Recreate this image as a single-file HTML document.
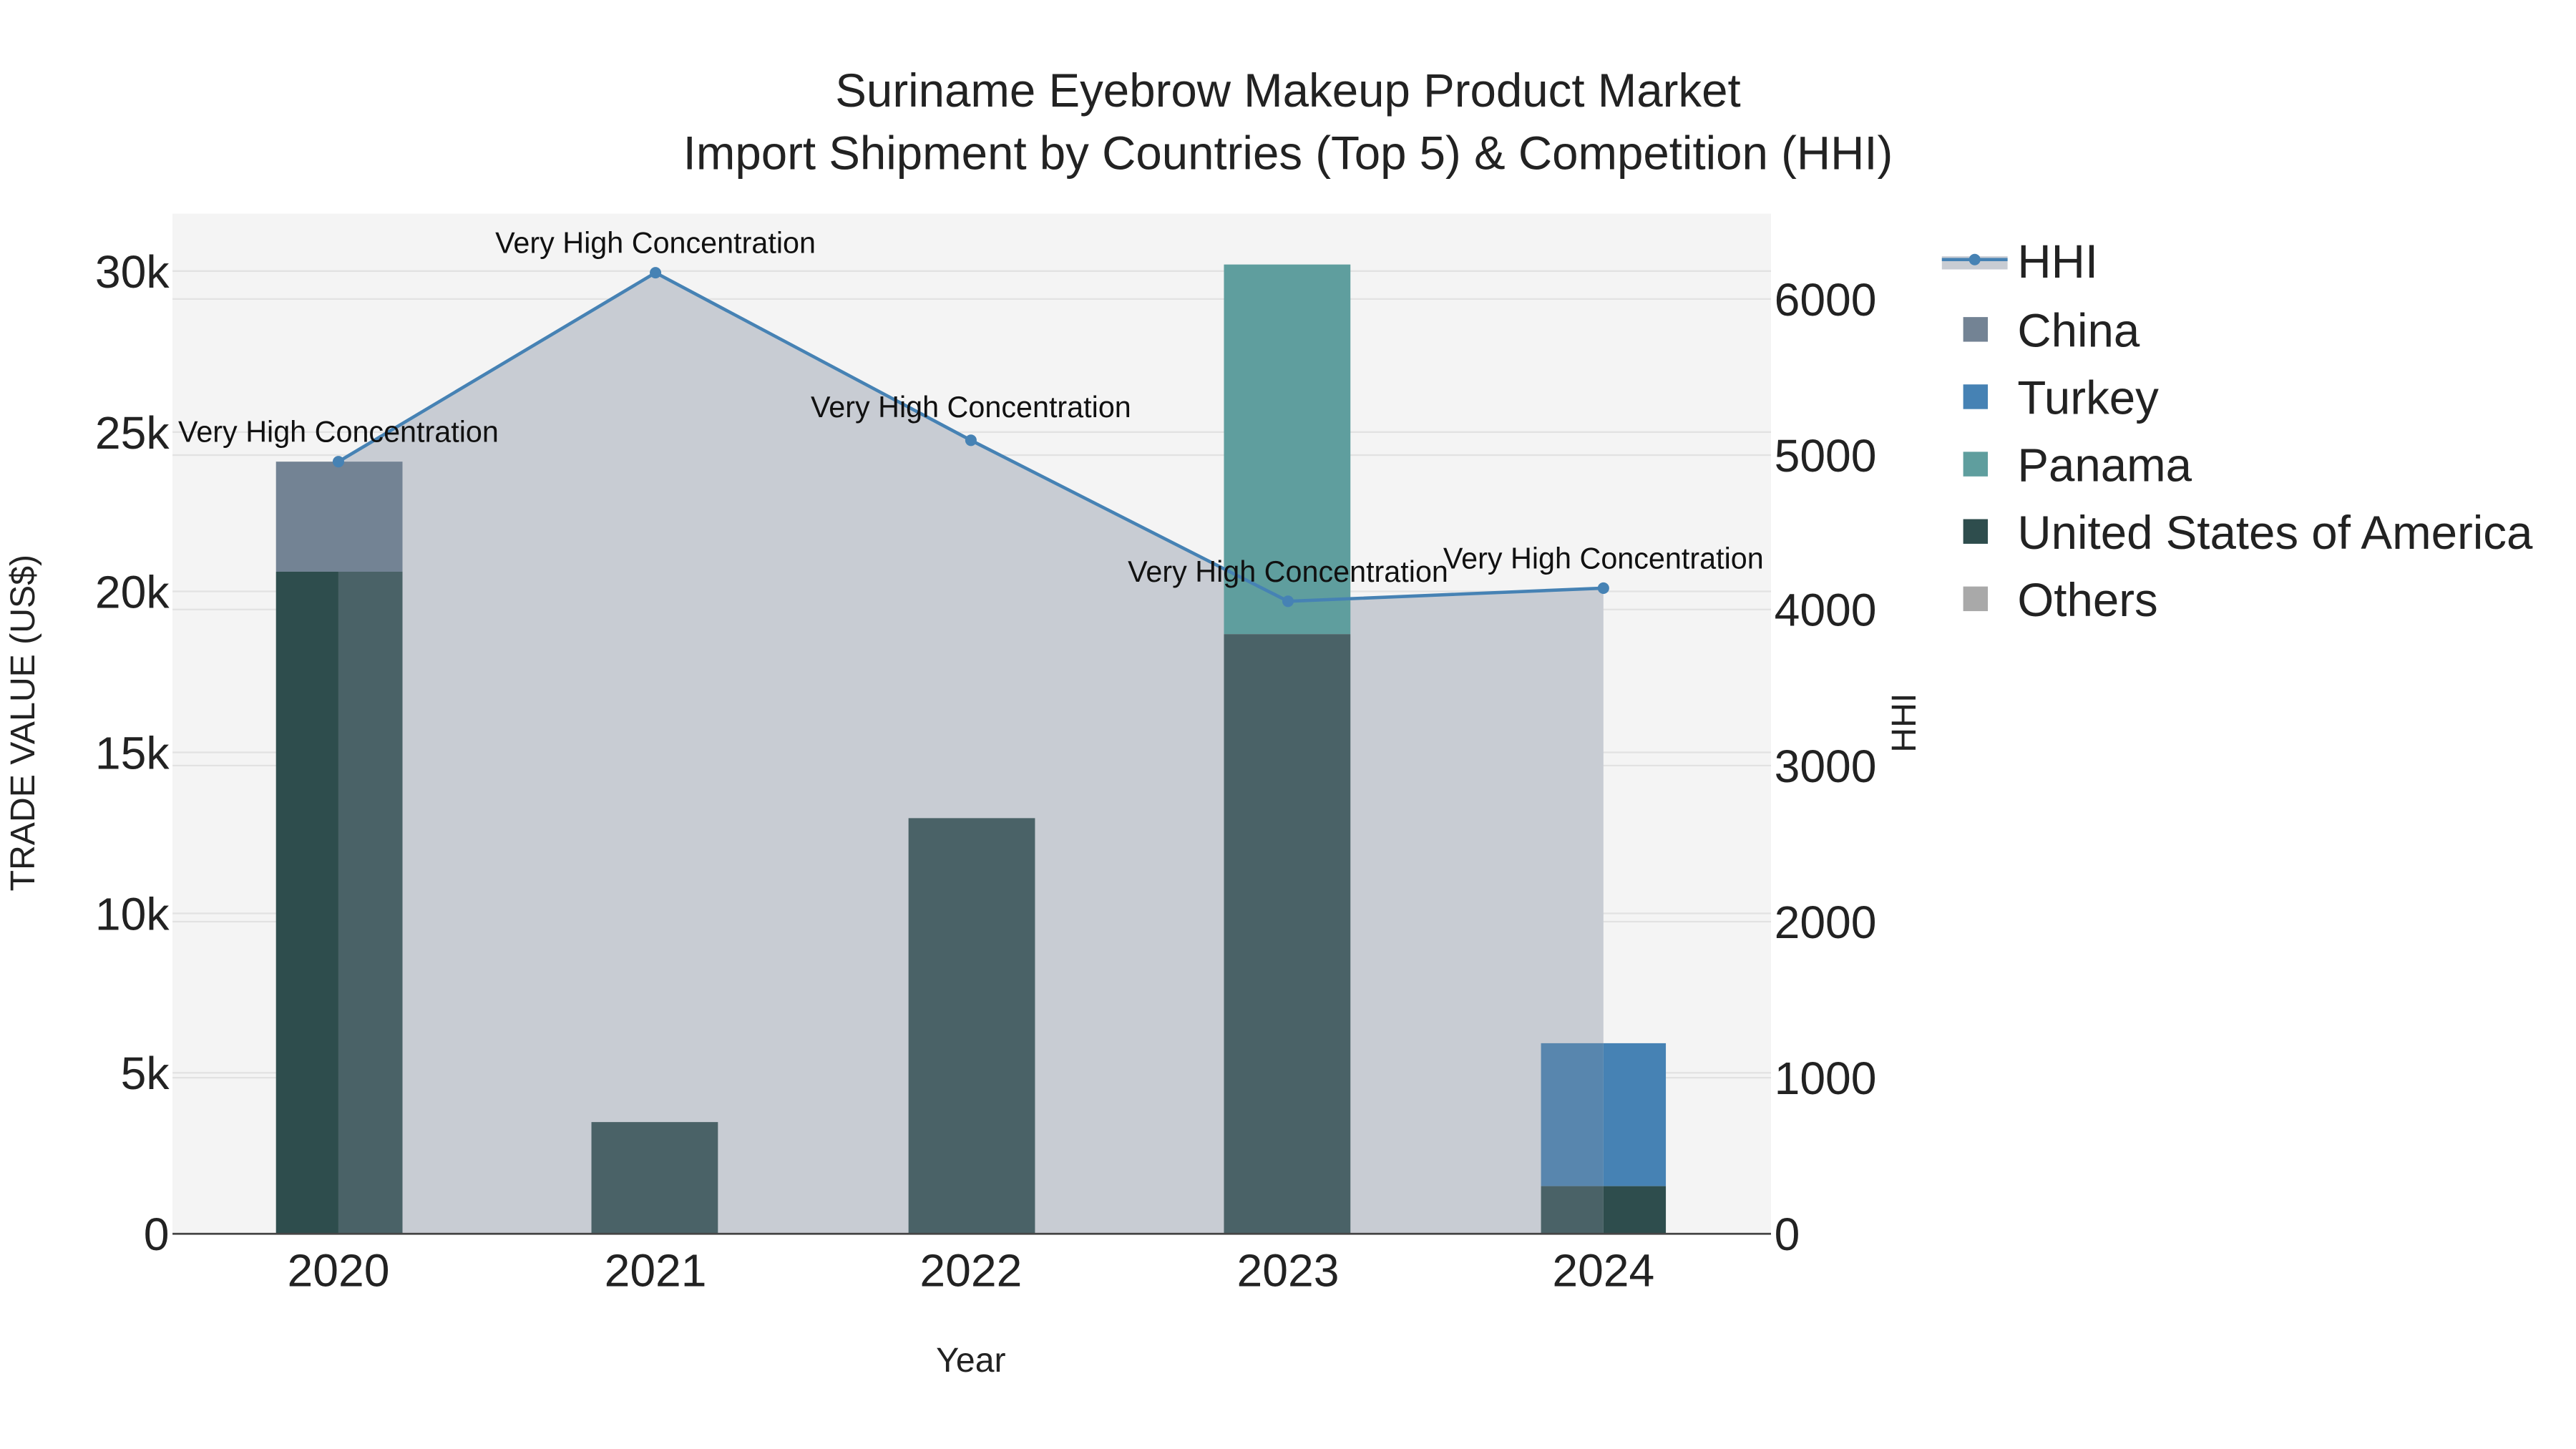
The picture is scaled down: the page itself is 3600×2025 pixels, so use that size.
<!DOCTYPE html>
<html><head><meta charset="utf-8"><style>
html,body{margin:0;padding:0;background:#fff;}
svg{display:block;font-family:"Liberation Sans",sans-serif;}
</style></head><body>
<svg width="3600" height="2025" viewBox="0 0 1568 882" preserveAspectRatio="none" xmlns="http://www.w3.org/2000/svg">
<rect x="0" y="0" width="1568" height="882" fill="#fff"/>
<rect x="105" y="130" width="973" height="621" fill="#f4f4f4"/>
<g stroke="#e2e2e2" stroke-width="1">
<line x1="105" x2="1078" y1="653" y2="653"/><line x1="105" x2="1078" y1="556" y2="556"/>
<line x1="105" x2="1078" y1="458" y2="458"/><line x1="105" x2="1078" y1="360" y2="360"/>
<line x1="105" x2="1078" y1="263" y2="263"/><line x1="105" x2="1078" y1="165" y2="165"/>
<line x1="105" x2="1078" y1="656" y2="656"/><line x1="105" x2="1078" y1="561" y2="561"/>
<line x1="105" x2="1078" y1="466" y2="466"/><line x1="105" x2="1078" y1="371" y2="371"/>
<line x1="105" x2="1078" y1="277" y2="277"/><line x1="105" x2="1078" y1="182" y2="182"/>
</g>
<polygon points="206,751 206,281 399,166 591,268 784,366 976,358 976,751" fill="#c8ccd3"/>
<rect x="168" y="281" width="77" height="67" fill="#738394"/>
<rect x="168" y="348" width="38" height="403" fill="#2e4d4d"/>
<rect x="206" y="348" width="39" height="403" fill="#4a6267"/>
<rect x="360" y="683" width="77" height="68" fill="#4a6267"/>
<rect x="553" y="498" width="77" height="253" fill="#4a6267"/>
<rect x="745" y="161" width="77" height="225" fill="#5f9e9e"/>
<rect x="745" y="386" width="77" height="365" fill="#4a6267"/>
<rect x="938" y="635" width="38" height="87" fill="#5886ae"/>
<rect x="976" y="635" width="38" height="87" fill="#4682b4"/>
<rect x="938" y="722" width="38" height="29" fill="#4a6267"/>
<rect x="976" y="722" width="38" height="29" fill="#2e4d4d"/>
<polyline points="206,281 399,166 591,268 784,366 976,358" fill="none" stroke="#4682b4" stroke-width="2"/>
<g fill="#4682b4"><circle cx="206" cy="281" r="3.5"/><circle cx="399" cy="166" r="3.5"/><circle cx="591" cy="268" r="3.5"/><circle cx="784" cy="366" r="3.5"/><circle cx="976" cy="358" r="3.5"/></g>
<line x1="105" x2="1078" y1="751" y2="751" stroke="#444" stroke-width="1.2"/>
<g font-size="18" fill="#111" text-anchor="middle">
<text x="206" y="269">Very High Concentration</text>
<text x="399" y="154">Very High Concentration</text>
<text x="591" y="254">Very High Concentration</text>
<text x="784" y="354">Very High Concentration</text>
<text x="976" y="346">Very High Concentration</text>
</g>
<g font-size="28.5" fill="#222" text-anchor="middle">
<text x="784" y="65">Suriname Eyebrow Makeup Product Market</text>
<text x="784" y="103">Import Shipment by Countries (Top 5) &amp; Competition (HHI)</text>
</g>
<g font-size="28" fill="#222" text-anchor="end">
<text x="103" y="761">0</text><text x="103" y="663">5k</text><text x="103" y="566">10k</text>
<text x="103" y="468">15k</text><text x="103" y="370">20k</text><text x="103" y="273">25k</text><text x="103" y="175">30k</text>
</g>
<g font-size="28" fill="#222" text-anchor="start">
<text x="1080" y="761">0</text><text x="1080" y="666">1000</text><text x="1080" y="571">2000</text>
<text x="1080" y="476">3000</text><text x="1080" y="381">4000</text><text x="1080" y="287">5000</text><text x="1080" y="192">6000</text>
</g>
<g font-size="28" fill="#222" text-anchor="middle">
<text x="206" y="783">2020</text><text x="399" y="783">2021</text><text x="591" y="783">2022</text><text x="784" y="783">2023</text><text x="976" y="783">2024</text>
</g>
<text x="591" y="835" font-size="21" fill="#222" text-anchor="middle">Year</text>
<text transform="translate(21,440) rotate(-90)" font-size="21" fill="#222" text-anchor="middle">TRADE VALUE (US$)</text>
<text transform="translate(1166,440) rotate(-90)" font-size="21" fill="#222" text-anchor="middle">HHI</text>
<rect x="1182" y="156" width="40" height="8" fill="#c8ccd3"/>
<line x1="1182" x2="1222" y1="158" y2="158" stroke="#4682b4" stroke-width="2"/>
<circle cx="1202" cy="158" r="3.5" fill="#4682b4"/>
<rect x="1195" y="193" width="15" height="15" fill="#738394"/>
<rect x="1195" y="234" width="15" height="15" fill="#4682b4"/>
<rect x="1195" y="275" width="15" height="15" fill="#5f9e9e"/>
<rect x="1195" y="316" width="15" height="15" fill="#2e4d4d"/>
<rect x="1195" y="357" width="15" height="15" fill="#a9a9a9"/>
<g font-size="28.5" fill="#222">
<text x="1228" y="169">HHI</text><text x="1228" y="211">China</text><text x="1228" y="252">Turkey</text>
<text x="1228" y="293">Panama</text><text x="1228" y="334">United States of America</text><text x="1228" y="375">Others</text>
</g>
</svg>
</body></html>
